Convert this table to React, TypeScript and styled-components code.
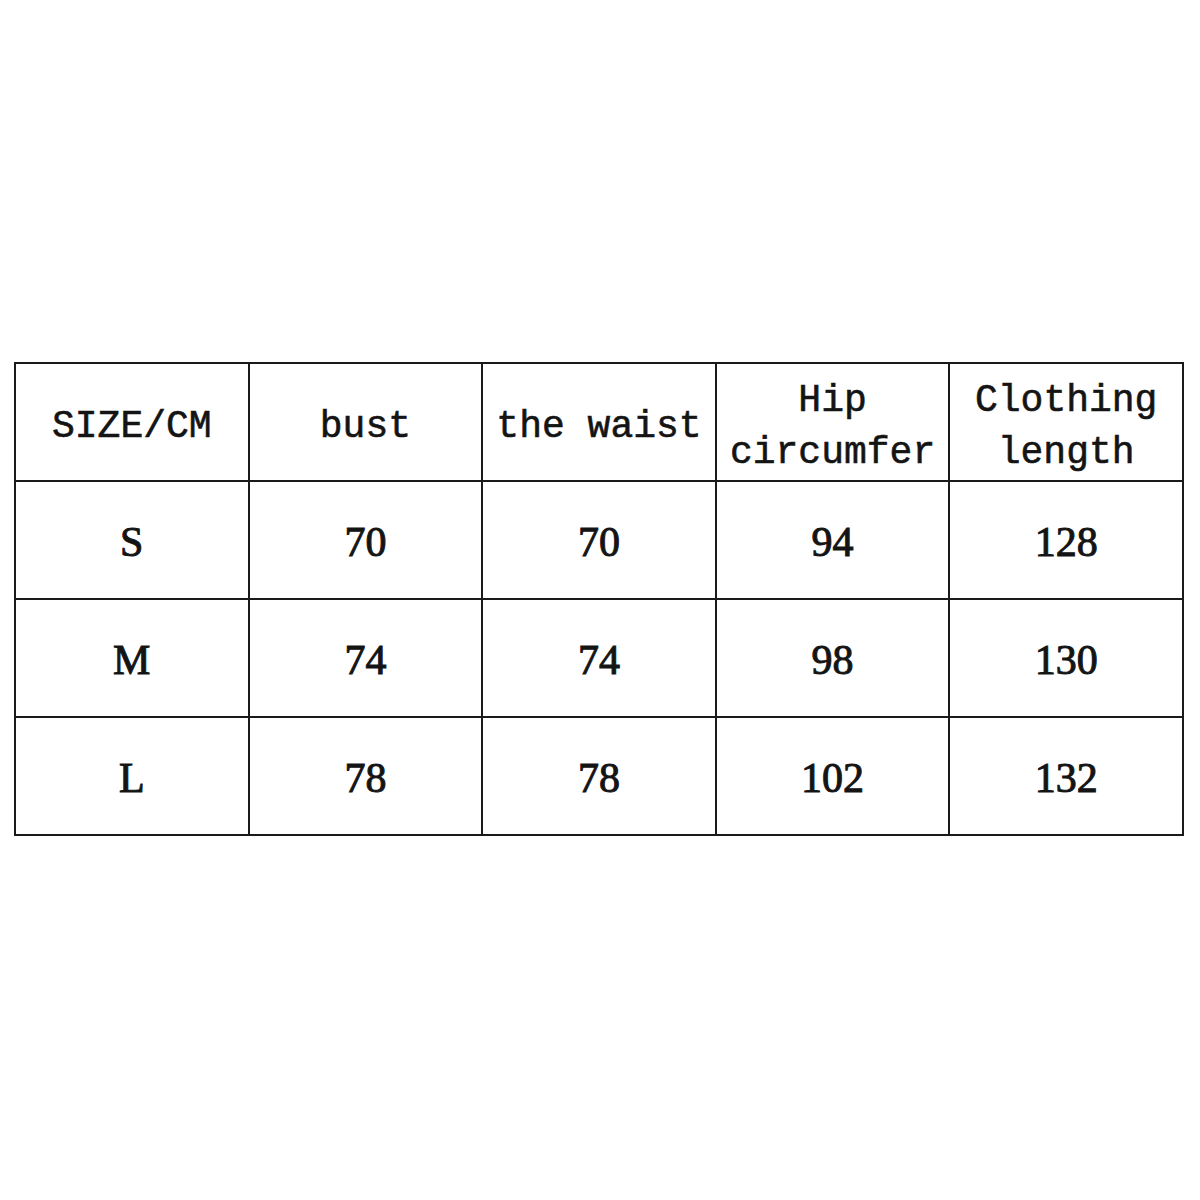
import React from "react";
import styled, { createGlobalStyle } from "styled-components";

type SizeRow = {
  size: string;
  bust: number;
  waist: number;
  hip: number;
  length: number;
};

const headers = ["SIZE/CM", "bust", "the waist", "Hip circumfer", "Clothing length"];

const rows: SizeRow[] = [
  { size: "S", bust: 70, waist: 70, hip: 94, length: 128 },
  { size: "M", bust: 74, waist: 74, hip: 98, length: 130 },
  { size: "L", bust: 78, waist: 78, hip: 102, length: 132 },
];

const GlobalStyle = createGlobalStyle`
  html, body {
    margin: 0;
    padding: 0;
    background: #ffffff;
  }
`;

const Page = styled.div`
  width: 1200px;
  height: 1200px;
  box-sizing: border-box;
  padding: 362px 0 0 14px;
  background: #ffffff;
`;

const Table = styled.table`
  width: 1170px;
  border-collapse: collapse;
  table-layout: fixed;
  color: #141414;
`;

const Row = styled.tr`
  height: 118px;
`;

const HeadCell = styled.th`
  border: 2px solid #1a1a1a;
  padding: 10px 4px 0;
  font-family: "Liberation Mono", "DejaVu Sans Mono", monospace;
  font-size: 38px;
  font-weight: 400;
  line-height: 52px;
  text-align: center;
  vertical-align: middle;
  -webkit-text-stroke: 0.6px #141414;
`;

const Cell = styled.td`
  border: 2px solid #1a1a1a;
  padding: 4px 0 0;
  font-family: "Liberation Serif", "DejaVu Serif", serif;
  font-size: 42px;
  font-weight: 400;
  text-align: center;
  vertical-align: middle;
  -webkit-text-stroke: 1px #141414;
`;

const App = () => (
  <>
    <GlobalStyle />
    <Page>
      <Table>
        <tbody>
          <Row>
            {headers.map((h) => (
              <HeadCell key={h}>{h}</HeadCell>
            ))}
          </Row>
          {rows.map((r) => (
            <Row key={r.size}>
              <Cell>{r.size}</Cell>
              <Cell>{r.bust}</Cell>
              <Cell>{r.waist}</Cell>
              <Cell>{r.hip}</Cell>
              <Cell>{r.length}</Cell>
            </Row>
          ))}
        </tbody>
      </Table>
    </Page>
  </>
);

export default App;
